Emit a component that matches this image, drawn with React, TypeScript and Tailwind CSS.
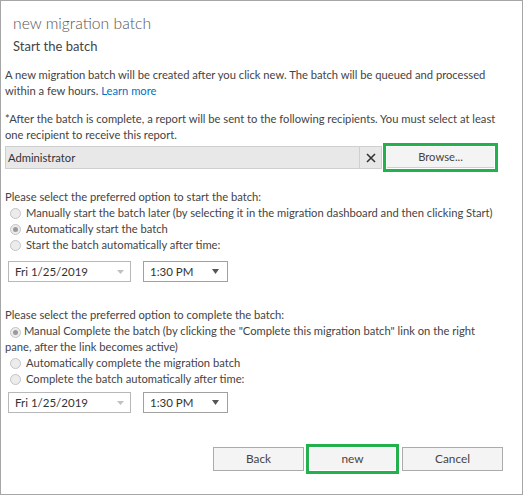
import React from 'react';

const font = { fontFamily: 'Lato, "Open Sans", sans-serif' };

function Radio({ checked = false }: { checked?: boolean }) {
  return (
    <span className="inline-flex w-[11px] h-[11px] rounded-full border border-[#c4c4c4] bg-[#ececec] items-center justify-center shrink-0">
      {checked && <span className="w-[5px] h-[5px] rounded-full bg-[#9a9a9a]" />}
    </span>
  );
}

function DateTime() {
  return (
    <div className="flex gap-[12px] pl-[3px]">
      <div className="w-[123px] h-[21px] border border-[#b8b8b8] bg-white flex items-center justify-between pl-[6px] pr-[6px] text-[11.5px] text-[#333]">
        <span>Fri 1/25/2019</span>
        <svg width="7" height="4" viewBox="0 0 7 4"><path d="M0 0h7L3.5 4z" fill="#c0c0c0" /></svg>
      </div>
      <div className="w-[85px] h-[21px] border border-[#a0a0a0] bg-white flex items-center justify-between pl-[6px] pr-[8px] text-[11.5px] text-[#333]">
        <span>1:30 PM</span>
        <svg width="7" height="5" viewBox="0 0 7 5"><path d="M0 0h7L3.5 5z" fill="#555" /></svg>
      </div>
    </div>
  );
}

export default function App() {
  return (
    <div className="w-[525px] h-[496px] bg-white" style={font}>
      <div className="w-[523px] h-[495px] border border-[#a6a6a6] text-[11.2px] leading-[16px] text-[#444]">
        {/* header */}
        <div className="pl-[12px] pt-[10px]">
          <div className="text-[15.7px] leading-[24px] font-light text-[#555]">new migration batch</div>
          <div className="text-[13px] leading-[20px] mt-[1px] text-[#444]">Start the batch</div>
        </div>

        <div className="px-[4px]">
          <p className="mt-[11px] whitespace-nowrap">
            A new migration batch will be created after you click new. The batch will be queued and processed
            <br />
            within a few hours. <span className="text-[#0072c6]">Learn more</span>
          </p>

          <p className="mt-[12px] whitespace-nowrap">
            *After the batch is complete, a report will be sent to the following recipients. You must select at least
            <br />
            one recipient to receive this report.
          </p>

          {/* recipients */}
          <div className="flex items-center h-[29px]">
            <div className="w-[377px] h-[23px] border border-[#cfcfcf] bg-[#e8e8e8] flex">
              <div className="flex-1 flex items-center pl-[2px] text-[#333]">Administrator</div>
              <div className="w-[22px] border-l border-[#cfcfcf] flex items-center justify-center">
                <svg width="10" height="10" viewBox="0 0 10 10"><path d="M1 1l8 8M9 1l-8 8" stroke="#333" strokeWidth="1.6" /></svg>
              </div>
            </div>
            <div className="ml-[1px] w-[115px] h-[29px] border-[3px] border-[#22b14c] p-[1px]">
              <div className="w-full h-full bg-[#f4f4f4] border-b border-[#d0d0d0] flex items-center justify-center text-[#444]">Browse...</div>
            </div>
          </div>

          {/* start options */}
          <div className="mt-[17px]">Please select the preferred option to start the batch:</div>
          <div className="flex items-center gap-[5px] pl-[5px] whitespace-nowrap"><Radio /><span>Manually start the batch later (by selecting it in the migration dashboard and then clicking Start)</span></div>
          <div className="flex items-center gap-[5px] pl-[5px]"><Radio checked /><span>Automatically start the batch</span></div>
          <div className="flex items-center gap-[5px] pl-[5px]"><Radio /><span>Start the batch automatically after time:</span></div>
          <div className="mt-[8px]"><DateTime /></div>

          {/* complete options */}
          <div className="mt-[25px]">Please select the preferred option to complete the batch:</div>
          <div className="whitespace-nowrap">
            <span className="inline-flex items-center pl-[5px] align-middle"><Radio checked /></span>{' '}
            Manual Complete the batch (by clicking the "Complete this migration batch" link on the right
            <br />
            pane, after the link becomes active)
          </div>
          <div className="flex items-center gap-[5px] pl-[5px]"><Radio /><span>Automatically complete the migration batch</span></div>
          <div className="flex items-center gap-[5px] pl-[5px]"><Radio /><span>Complete the batch automatically after time:</span></div>
          <div className="mt-[5px]"><DateTime /></div>

          {/* footer buttons */}
          <div className="mt-[31px] flex justify-end items-center pr-[15px]">
            <div className="w-[91px] h-[24px] border border-[#ababab] bg-[#f4f4f4] flex items-center justify-center text-[11.8px] text-[#444]">Back</div>
            <div className="ml-[2px] w-[93px] h-[30px] border-[3px] border-[#22b14c] p-[1px]">
              <div className="w-full h-full bg-[#f4f4f4] flex items-center justify-center text-[11.8px] text-[#444]">new</div>
            </div>
            <div className="ml-[3px] w-[101px] h-[24px] border border-[#ababab] bg-[#f4f4f4] flex items-center justify-center text-[11.8px] text-[#444]">Cancel</div>
          </div>
        </div>
      </div>
    </div>
  );
}
